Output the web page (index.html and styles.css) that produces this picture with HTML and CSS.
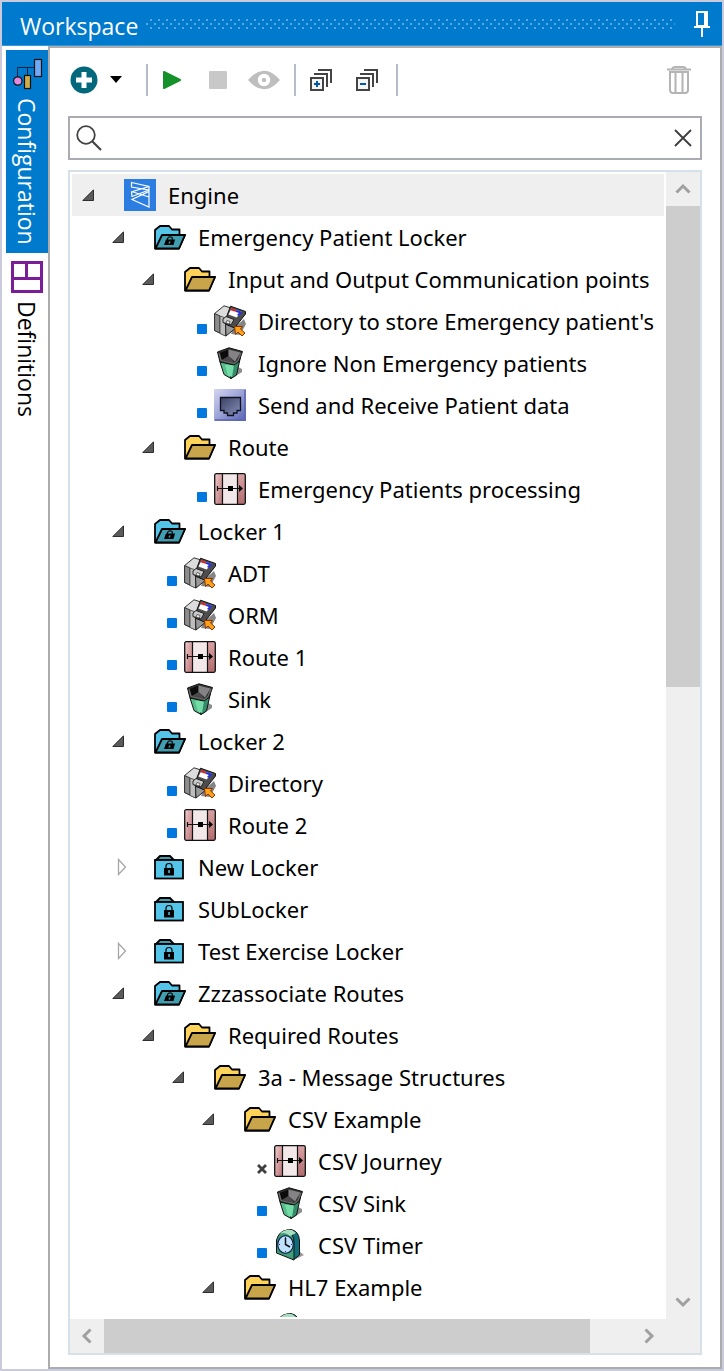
FILE: index.html
```html
<!DOCTYPE html>
<html lang="en">
<head>
<meta charset="utf-8">
<title>Workspace</title>
<link rel="stylesheet" href="styles.css">
</head>
<body>
<svg class="sprite" aria-hidden="true">
  <defs>
    <linearGradient id="pinkL" x1="0" y1="0" x2="1" y2="1"><stop offset="0" stop-color="#f0cccd"/><stop offset="1" stop-color="#b97577"/></linearGradient>
    <linearGradient id="pinkR" x1="0" y1="0" x2="0" y2="1"><stop offset="0" stop-color="#d9a2a4"/><stop offset="1" stop-color="#b06c6e"/></linearGradient>
    <linearGradient id="portBg" x1="0" y1="0" x2="1" y2="1"><stop offset="0" stop-color="#d3d6ef"/><stop offset=".5" stop-color="#9aa2d6"/><stop offset="1" stop-color="#5661b2"/></linearGradient>
    <linearGradient id="portFg" x1="0" y1="0" x2="1" y2="1"><stop offset="0" stop-color="#3c4263"/><stop offset="1" stop-color="#8790bd"/></linearGradient>
  </defs>
  <symbol id="open" viewBox="0 0 12 12"><path d="M11.500 .8V11.500H.8Z" fill="#5b5b5b" stroke="#2e2e2e"/></symbol>
  <symbol id="closed" viewBox="0 0 12 18"><path d="M1.500 1.500L8.500 9L1.500 16.500Z" fill="#fff" stroke="#a6a6a6" stroke-width="1.300"/></symbol>
  <symbol id="dot" viewBox="0 0 10 10"><rect width="10" height="10" rx="1" fill="#0078e0"/></symbol>
  <symbol id="cross" viewBox="0 0 10 10"><path d="M1 1L9 9M9 1L1 9" stroke="#3f3f3f" stroke-width="2.800"/></symbol>
  <symbol id="engine" viewBox="0 0 32 32"><rect width="32" height="32" fill="#2b7de1"/><path d="M7.500 3.500L25 7.500V11L7.500 8ZM25 7.500L7.500 13L8 17.500L25 11M7.500 12.500L25 18M8 20.500L25 28V12.500Z" fill="none" stroke="#fff" stroke-width="1.200"/></symbol>
  <symbol id="folder" viewBox="0 0 32 32"><path d="M1 27V9L6 5H15L18 8.500H25.500V14H31L25 27.500H1Z" fill="#ffd25a" stroke="#000" stroke-width="1.800" stroke-linejoin="round"/><path d="M8 14H31L25 27.500H1.500Z" fill="#c8a54b" stroke="#000" stroke-width="1.800" stroke-linejoin="round"/></symbol>
  <symbol id="locker-open" viewBox="0 0 32 32"><path d="M1 27V9L6 5H15L18 8.500H25.500V14H31L25 27.500H1Z" fill="#54c5e8" stroke="#000" stroke-width="1.800" stroke-linejoin="round"/><path d="M8 14H31L25 27.500H1.500Z" fill="#419eb0" stroke="#000" stroke-width="1.800" stroke-linejoin="round"/><path d="M12 18.500H21L19.500 24H10Z"/><path d="M13.500 19V17.500Q14.500 15.500 17 16Q19 16.500 18 19" fill="none" stroke="#000" stroke-width="1.200"/><path d="M15 20.500H16.500L16 22.500H14.500Z" fill="#419eb0"/></symbol>
  <symbol id="locker" viewBox="0 0 32 32"><path d="M2 9L6 5H16L20 9Z" fill="#419eb0" stroke="#000" stroke-width="1.800"/><rect x="1" y="9" width="28" height="18.500" fill="#54c5e8" stroke="#000" stroke-width="1.800"/><rect x="10" y="17" width="10" height="7.500"/><path d="M12 17V15Q12 12.500 15 12.500Q18 12.500 18 15V17" fill="none" stroke="#000" stroke-width="1.200"/><rect x="14.300" y="19" width="1.500" height="3" fill="#54c5e8"/></symbol>
  <symbol id="route" viewBox="0 0 32 32"><rect x=".7" y=".7" width="30.600" height="30.600" rx="1.500" fill="#f3e8e9"/><path d="M1 1H8V31H1Z" fill="url(#pinkL)"/><path d="M24 1H31V31H24Z" fill="url(#pinkR)"/><rect x=".7" y=".7" width="30.600" height="30.600" rx="1.500" fill="none" stroke="#111" stroke-width="1.300"/><path d="M8.500 1V31M23.500 1V31M3.500 13V18M4 15.500H26" stroke="#111" stroke-width="1.200"/><path d="M14 13H19V18H14ZM25 12L29 15.500L25 19Z"/></symbol>
  <symbol id="port" viewBox="0 0 32 32"><rect width="32" height="32" fill="url(#portBg)"/><path d="M31 1V31H1" fill="none" stroke="#5c67b4" stroke-width="1.500"/><path d="M6.500 8.500H26.500V21.500H23V24H19.500V26.500H13.500V24H10V21.500H6.500Z" fill="url(#portFg)" stroke="#10131f" stroke-width="1.300"/></symbol>
  <symbol id="bin" viewBox="0 0 32 32"><path d="M17 32L28 25V22L24 20Z" fill="#8e8e8e"/><path d="M6 15L10 27.500L17 31.500V16Z" fill="#57bd8b" stroke="#111"/><path d="M17 17V31.500L22.500 28L26.500 10Z" fill="#348c6b" stroke="#111"/><path d="M11 18L14 28.500L18 30L20 18Z" fill="#74dca6"/><path d="M3.500 5L15 .8L28.500 4.500L25 14.500L20 18L6 15Z" fill="#333" stroke="#111"/><path d="M5.500 6L14.500 2.500V9L8 13Z" fill="#0b0b0b"/><path d="M14.500 2.500L26.500 5.500L21 14.500L14.500 9Z" fill="#858285"/><path d="M8 13L14.500 9L20 15.500Z" fill="#4d4a4d"/><path d="M5 6L7 13.500L20.500 16.500L24 13.500L27 6" fill="none" stroke="#6c6c6c" stroke-width="1.200"/></symbol>
  <symbol id="drive" viewBox="0 0 32 32"><path d="M19 24L30 14L32 19L26 30L17 29Z" fill="#858585"/><path d="M.6 8.500L10 .8L17 3L12 14V31L.6 25.500Z" fill="#dcdcdc" stroke="#333"/><path d="M.6 8.500L6 11V28L.6 25.500Z" fill="#8d8d8d" stroke="#333"/><path d="M6 11L11.500 13V31L6 28.500Z" fill="#bdbdbd" stroke="#444" stroke-width=".8"/><path d="M11.500 18L23 22L12 31Z" fill="#999" stroke="#222"/><path d="M11 16L16.500 1.200L31.500 6.500V9L20.500 23L11 19Z" fill="#4d4d4d" stroke="#111"/><path d="M9 14L12 11.500L20 14.500L17 20L9 17.500Z" fill="#c9c9c9" stroke="#222"/><path d="M13 15.500L16 16.500L15.500 19L12 18Z" fill="#f5f5f5" stroke="#333" stroke-width=".7"/><path d="M17.500 3.500L28 7L22.500 12.500L14.500 9.500Z" fill="#fff"/><path d="M17.500 3.200L22.500 5L21.500 6.800L16.500 5.200Z" fill="#e02020"/><path d="M22.500 5L28.500 7L25 11L23 10L24.800 8L21.500 6.800Z" fill="#2632d8"/><path d="M20.500 21.500H28.500L26.500 24L31 28L28 31L24 27L21.500 29.500Z" fill="#ffa21a" stroke="#8a3500"/></symbol>
  <symbol id="clock" viewBox="0 0 32 32"><path d="M20 31L30 26L25 22Z" fill="#999"/><path d="M13 1L17 .5Q25 2 25.500 12V26L19 31L16 10Z" fill="#106e79" stroke="#111"/><path d="M2.500 24V11Q5 2 13 1Q20 4 20 14V31Z" fill="#3f9f7b" stroke="#111"/><path d="M6 5Q10 0 18 1L22 4L16 7Q11 2 6 5Z" fill="#a7dfbd"/><ellipse cx="11.500" cy="15.500" rx="7.800" ry="8.800" fill="#bfe0ff" stroke="#152c50" stroke-width="1.300"/><path d="M11.500 9V15.500L16 18" fill="none" stroke="#111" stroke-width="1.500"/><path d="M11.500 8V9M11.500 22V23M5 15.500H6M17 15.500H18" stroke="#335"/></symbol>
</svg>

<main class="window">
  <header class="titlebar">
    <h1 class="title">Workspace</h1>
    <svg class="grip" height="10" aria-hidden="true"><defs><pattern id="dots" width="8" height="10" patternUnits="userSpaceOnUse"><path d="M0 4h2v2H0zM4 0h2v2H4zM4 8h2v2H4z" fill="#52abe4"/></pattern></defs><rect width="100%" height="10" fill="url(#dots)"/></svg>
    <button class="pin" aria-label="Pin panel"><svg width="18" height="28" viewBox="0 0 18 28"><path d="M4 2H14V16H4Z" fill="none" stroke="#fff" stroke-width="2"/><path d="M11 1H15V16H11ZM1 16H17V18H1ZM8 17H10V27H8Z" fill="#fff"/></svg></button>
  </header>
  <div class="body">
    <nav class="tabs">
      <button class="tab tab-active"><svg width="32" height="32" viewBox="0 0 32 32"><path d="M6.500 19V9.500H23M16.500 10V18" fill="none" stroke="#06243f"/><rect x="23.500" y="1.500" width="7" height="17" fill="#6fa8f5" stroke="#111" stroke-width="1.200"/><rect x="13.500" y="17.500" width="6" height="13" fill="#d0ab4a" stroke="#111" stroke-width="1.200"/><circle cx="6.800" cy="23" r="4.200" fill="#e38ae0" stroke="#111" stroke-width="1.200"/></svg><span>Configuration</span></button>
      <button class="tab"><svg width="32" height="32" viewBox="0 0 32 32"><path d="M1.500 1.500H30.500V30.500H1.500ZM1.500 17.500H30.500M15.500 1.500V17.500" fill="none" stroke="#7a1d96" stroke-width="3"/></svg><span>Definitions</span></button>
    </nav>
    <section class="panel">
      <div class="toolbar">
        <button class="tool add" aria-label="Add"><svg width="52" height="28" viewBox="0 0 52 28"><circle cx="14" cy="14" r="13.500" fill="#03687c"/><path d="M14 6V22M6 14H22" stroke="#fff" stroke-width="5"/><path d="M40 10H52L46 17Z"/></svg></button>
        <span class="rule"></span>
        <button class="tool play" aria-label="Start"><svg width="18" height="20" viewBox="0 0 18 20"><path d="M1 2L17 10L1 18Z" fill="#14912b" stroke="#14912b" stroke-width="2" stroke-linejoin="round"/></svg></button>
        <button class="tool stop" aria-label="Stop"><svg width="18" height="20" viewBox="0 0 18 20"><rect y="1" width="18" height="18" rx="1" fill="#c8c8c8"/></svg></button>
        <button class="tool eye" aria-label="View"><svg width="32" height="20" viewBox="0 0 32 20"><path d="M0 10Q16-8.500 32 10Q16 28.500 0 10Z" fill="#bebebe"/><circle cx="16" cy="10" r="6.200" fill="#fff"/><circle cx="16" cy="10" r="2.200" fill="#bebebe"/></svg></button>
        <span class="rule"></span>
        <button class="tool expand" aria-label="Expand all"><svg width="24" height="24" viewBox="0 0 24 24"><path d="M9 2H22V15M5 6H18V19" fill="none" stroke="#444" stroke-width="2"/><rect x="2" y="10" width="12" height="12" fill="#f4f4f4" stroke="#444" stroke-width="2"/><path d="M8 13V19M5 16H11" stroke="#0057a8" stroke-width="2"/></svg></button>
        <button class="tool collapse" aria-label="Collapse all"><svg width="24" height="24" viewBox="0 0 24 24"><path d="M9 2H22V15M5 6H18V19" fill="none" stroke="#444" stroke-width="2"/><rect x="2" y="10" width="12" height="12" fill="#f4f4f4" stroke="#444" stroke-width="2"/><path d="M5 16H11" stroke="#0057a8" stroke-width="2"/></svg></button>
        <span class="rule"></span>
        <button class="tool trash" aria-label="Delete"><svg width="26" height="28" viewBox="0 0 26 28"><path d="M1 3.500H25M6 2.500Q7 1 9 1H17Q19 1 20 2.500M4 6V24Q4 27 7 27H19Q22 27 22 24V6ZM9.500 6V27M16.500 6V27" fill="none" stroke="#b4b4b4" stroke-width="2"/></svg></button>
      </div>
      <div class="search">
        <svg width="26" height="26" viewBox="0 0 26 26" aria-hidden="true"><circle cx="10" cy="10" r="8.800" fill="none" stroke="#444" stroke-width="1.800"/><path d="M16 16L25 25" stroke="#444" stroke-width="2.200"/></svg>
        <input type="text" class="search-input" aria-label="Search">
        <button class="clear" aria-label="Clear search"><svg width="18" height="18" viewBox="0 0 18 18"><path d="M1 1L17 17M17 1L1 17" stroke="#3f3f3f" stroke-width="1.900"/></svg></button>
      </div>
      <div class="treebox">
        <div class="viewport">
          <ul class="tree">
            <li><div class="row selected"><span class="lead"><svg class="open"><use href="#open"/></svg></span><svg class="icon"><use href="#engine"/></svg><span>Engine</span></div>
              <ul>
                <li><div class="row"><span class="lead"><svg class="open"><use href="#open"/></svg></span><svg class="icon"><use href="#locker-open"/></svg><span>Emergency Patient Locker</span></div>
                  <ul>
                    <li><div class="row"><span class="lead"><svg class="open"><use href="#open"/></svg></span><svg class="icon"><use href="#folder"/></svg><span>Input and Output Communication points</span></div>
                      <ul>
                        <li><div class="row"><span class="lead leaf"><svg class="dot"><use href="#dot"/></svg></span><svg class="icon"><use href="#drive"/></svg><span>Directory to store Emergency patient's</span></div></li>
                        <li><div class="row"><span class="lead leaf"><svg class="dot"><use href="#dot"/></svg></span><svg class="icon"><use href="#bin"/></svg><span>Ignore Non Emergency patients</span></div></li>
                        <li><div class="row"><span class="lead leaf"><svg class="dot"><use href="#dot"/></svg></span><svg class="icon"><use href="#port"/></svg><span>Send and Receive Patient data</span></div></li>
                      </ul>
                    </li>
                    <li><div class="row"><span class="lead"><svg class="open"><use href="#open"/></svg></span><svg class="icon"><use href="#folder"/></svg><span>Route</span></div>
                      <ul>
                        <li><div class="row"><span class="lead leaf"><svg class="dot"><use href="#dot"/></svg></span><svg class="icon"><use href="#route"/></svg><span>Emergency Patients processing</span></div></li>
                      </ul>
                    </li>
                  </ul>
                </li>
                <li><div class="row"><span class="lead"><svg class="open"><use href="#open"/></svg></span><svg class="icon"><use href="#locker-open"/></svg><span>Locker 1</span></div>
                  <ul>
                    <li><div class="row"><span class="lead leaf"><svg class="dot"><use href="#dot"/></svg></span><svg class="icon"><use href="#drive"/></svg><span>ADT</span></div></li>
                    <li><div class="row"><span class="lead leaf"><svg class="dot"><use href="#dot"/></svg></span><svg class="icon"><use href="#drive"/></svg><span>ORM</span></div></li>
                    <li><div class="row"><span class="lead leaf"><svg class="dot"><use href="#dot"/></svg></span><svg class="icon"><use href="#route"/></svg><span>Route 1</span></div></li>
                    <li><div class="row"><span class="lead leaf"><svg class="dot"><use href="#dot"/></svg></span><svg class="icon"><use href="#bin"/></svg><span>Sink</span></div></li>
                  </ul>
                </li>
                <li><div class="row"><span class="lead"><svg class="open"><use href="#open"/></svg></span><svg class="icon"><use href="#locker-open"/></svg><span>Locker 2</span></div>
                  <ul>
                    <li><div class="row"><span class="lead leaf"><svg class="dot"><use href="#dot"/></svg></span><svg class="icon"><use href="#drive"/></svg><span>Directory</span></div></li>
                    <li><div class="row"><span class="lead leaf"><svg class="dot"><use href="#dot"/></svg></span><svg class="icon"><use href="#route"/></svg><span>Route 2</span></div></li>
                  </ul>
                </li>
                <li><div class="row"><span class="lead"><svg class="closed"><use href="#closed"/></svg></span><svg class="icon"><use href="#locker"/></svg><span>New Locker</span></div></li>
                <li><div class="row"><span class="lead"></span><svg class="icon"><use href="#locker"/></svg><span>SUbLocker</span></div></li>
                <li><div class="row"><span class="lead"><svg class="closed"><use href="#closed"/></svg></span><svg class="icon"><use href="#locker"/></svg><span>Test Exercise Locker</span></div></li>
                <li><div class="row"><span class="lead"><svg class="open"><use href="#open"/></svg></span><svg class="icon"><use href="#locker-open"/></svg><span>Zzzassociate Routes</span></div>
                  <ul>
                    <li><div class="row"><span class="lead"><svg class="open"><use href="#open"/></svg></span><svg class="icon"><use href="#folder"/></svg><span>Required Routes</span></div>
                      <ul>
                        <li><div class="row"><span class="lead"><svg class="open"><use href="#open"/></svg></span><svg class="icon"><use href="#folder"/></svg><span>3a - Message Structures</span></div>
                          <ul>
                            <li><div class="row"><span class="lead"><svg class="open"><use href="#open"/></svg></span><svg class="icon"><use href="#folder"/></svg><span>CSV Example</span></div>
                              <ul>
                                <li><div class="row"><span class="lead leaf"><svg class="dot"><use href="#cross"/></svg></span><svg class="icon"><use href="#route"/></svg><span>CSV Journey</span></div></li>
                                <li><div class="row"><span class="lead leaf"><svg class="dot"><use href="#dot"/></svg></span><svg class="icon"><use href="#bin"/></svg><span>CSV Sink</span></div></li>
                                <li><div class="row"><span class="lead leaf"><svg class="dot"><use href="#dot"/></svg></span><svg class="icon"><use href="#clock"/></svg><span>CSV Timer</span></div></li>
                              </ul>
                            </li>
                            <li><div class="row"><span class="lead"><svg class="open"><use href="#open"/></svg></span><svg class="icon"><use href="#folder"/></svg><span>HL7 Example</span></div>
                              <ul>
                                <li><div class="row"><span class="lead"></span><svg class="icon"><use href="#clock"/></svg></div></li>
                              </ul>
                            </li>
                          </ul>
                        </li>
                      </ul>
                    </li>
                  </ul>
                </li>
              </ul>
            </li>
          </ul>
        </div>
        <div class="vscroll">
          <button class="arrow" aria-label="Scroll up"><svg width="16" height="12" viewBox="0 0 16 12"><path d="M1.500 9.500L8 3L14.500 9.500" fill="none" stroke="#a0a0a0" stroke-width="3"/></svg></button>
          <div class="vtrack"><div class="vthumb"></div></div>
          <button class="arrow" aria-label="Scroll down"><svg width="16" height="12" viewBox="0 0 16 12"><path d="M1.500 2.500L8 9L14.500 2.500" fill="none" stroke="#a0a0a0" stroke-width="3"/></svg></button>
        </div>
        <div class="hscroll">
          <button class="arrow" aria-label="Scroll left"><svg width="12" height="16" viewBox="0 0 12 16"><path d="M9.500 1.500L3 8L9.500 14.500" fill="none" stroke="#a0a0a0" stroke-width="3"/></svg></button>
          <div class="htrack"><div class="hthumb"></div></div>
          <button class="arrow" aria-label="Scroll right"><svg width="12" height="16" viewBox="0 0 12 16"><path d="M2.500 1.500L9 8L2.500 14.500" fill="none" stroke="#a0a0a0" stroke-width="3"/></svg></button>
        </div>
        <div class="corner"></div>
      </div>
    </section>
  </div>
</main>
</body>
</html>
```

FILE: styles.css
```css
* { box-sizing: border-box; }
body { margin: 0; font: 23px/30px "Open Sans", "Noto Sans", sans-serif; color: #000; background: #fff; }
button { border: 0; padding: 0; margin: 0; background: none; font: inherit; color: inherit; display: flex; align-items: center; justify-content: center; flex: none; }
svg { display: block; flex: none; }
ul { list-style: none; margin: 0; padding: 0; }
.sprite { position: absolute; width: 0; height: 0; }

.window { height: 100vh; display: flex; flex-direction: column; border: 2px solid #c9cbdc; background: #fff; }
.titlebar { flex: none; height: 44px; display: flex; align-items: center; padding: 0 11px 0 18px; background: #007acc; border-bottom: 1px solid #3698dc; color: #fff; }
.title { margin: 0; font-size: 23px; font-weight: 400; line-height: 32px; padding-top: 4px; flex: none; }
.grip { flex: 1; min-width: 0; margin: 0 18px 0 8px; }
.pin { width: 18px; height: 28px; }

.body { flex: 1; min-height: 0; display: flex; }
.tabs { width: 46px; flex: none; display: flex; flex-direction: column; align-items: flex-end; padding-top: 4px; }
.tab { writing-mode: vertical-rl; width: 42px; padding: 8px 5px; gap: 8px; justify-content: flex-start; }
.tab-active { background: #007acc; color: #fff; }

.panel { flex: 1; min-width: 0; display: flex; flex-direction: column; border: 2px solid #acacae; padding: 16px 18px 12px; }
.toolbar { display: flex; align-items: center; height: 32px; flex: none; }
.rule { width: 2px; height: 32px; background: #b7bbc6; flex: none; }
.add { margin: 0 24px 0 2px; }
.play { margin: 0 28px 0 15px; }
.eye { margin: 0 14px 0 21px; }
.expand { margin: 0 22px 0 13px; }
.collapse { margin-right: 17px; }
.trash { margin: 0 10px 0 auto; }

.search { flex: none; height: 44px; margin-top: 20px; border: 2px solid #abacb3; display: flex; align-items: center; padding: 0 8px 0 6px; gap: 8px; }
.search-input { flex: 1; min-width: 0; border: 0; outline: 0; background: none; font: inherit; padding: 0; }

.treebox { flex: 1; min-height: 0; margin-top: 10px; border: 2px solid #d6e0e9; display: grid; grid-template: minmax(0, 1fr) 34px / minmax(0, 1fr) 34px; }
.viewport { overflow: hidden; margin: 2px; }
.tree { font-family: "Noto Sans", "Open Sans", sans-serif; font-size: 22px; }
.row { height: 42px; display: flex; align-items: center; padding-left: 10px; white-space: nowrap; }
.tree ul { padding-left: 30px; }
.selected { background: #efefef; }
.lead { width: 42px; height: 42px; flex: none; padding-top: 15px; }
.leaf { padding: 24px 0 0 25px; }
.icon { width: 32px; height: 32px; margin-right: 12px; }
.open { width: 12px; height: 12px; }
.closed { width: 12px; height: 18px; margin: -3px 0 0 5px; }
.dot { width: 10px; height: 10px; }

.vscroll { display: flex; flex-direction: column; background: #efefef; }
.hscroll { display: flex; background: #efefef; }
.corner { background: #efefef; }
.arrow { width: 34px; height: 34px; }
.vtrack { flex: 1; }
.vthumb { height: 44.6%; background: #cdcdcd; }
.htrack { flex: 1; }
.hthumb { width: 92%; height: 34px; background: #cdcdcd; }
```
